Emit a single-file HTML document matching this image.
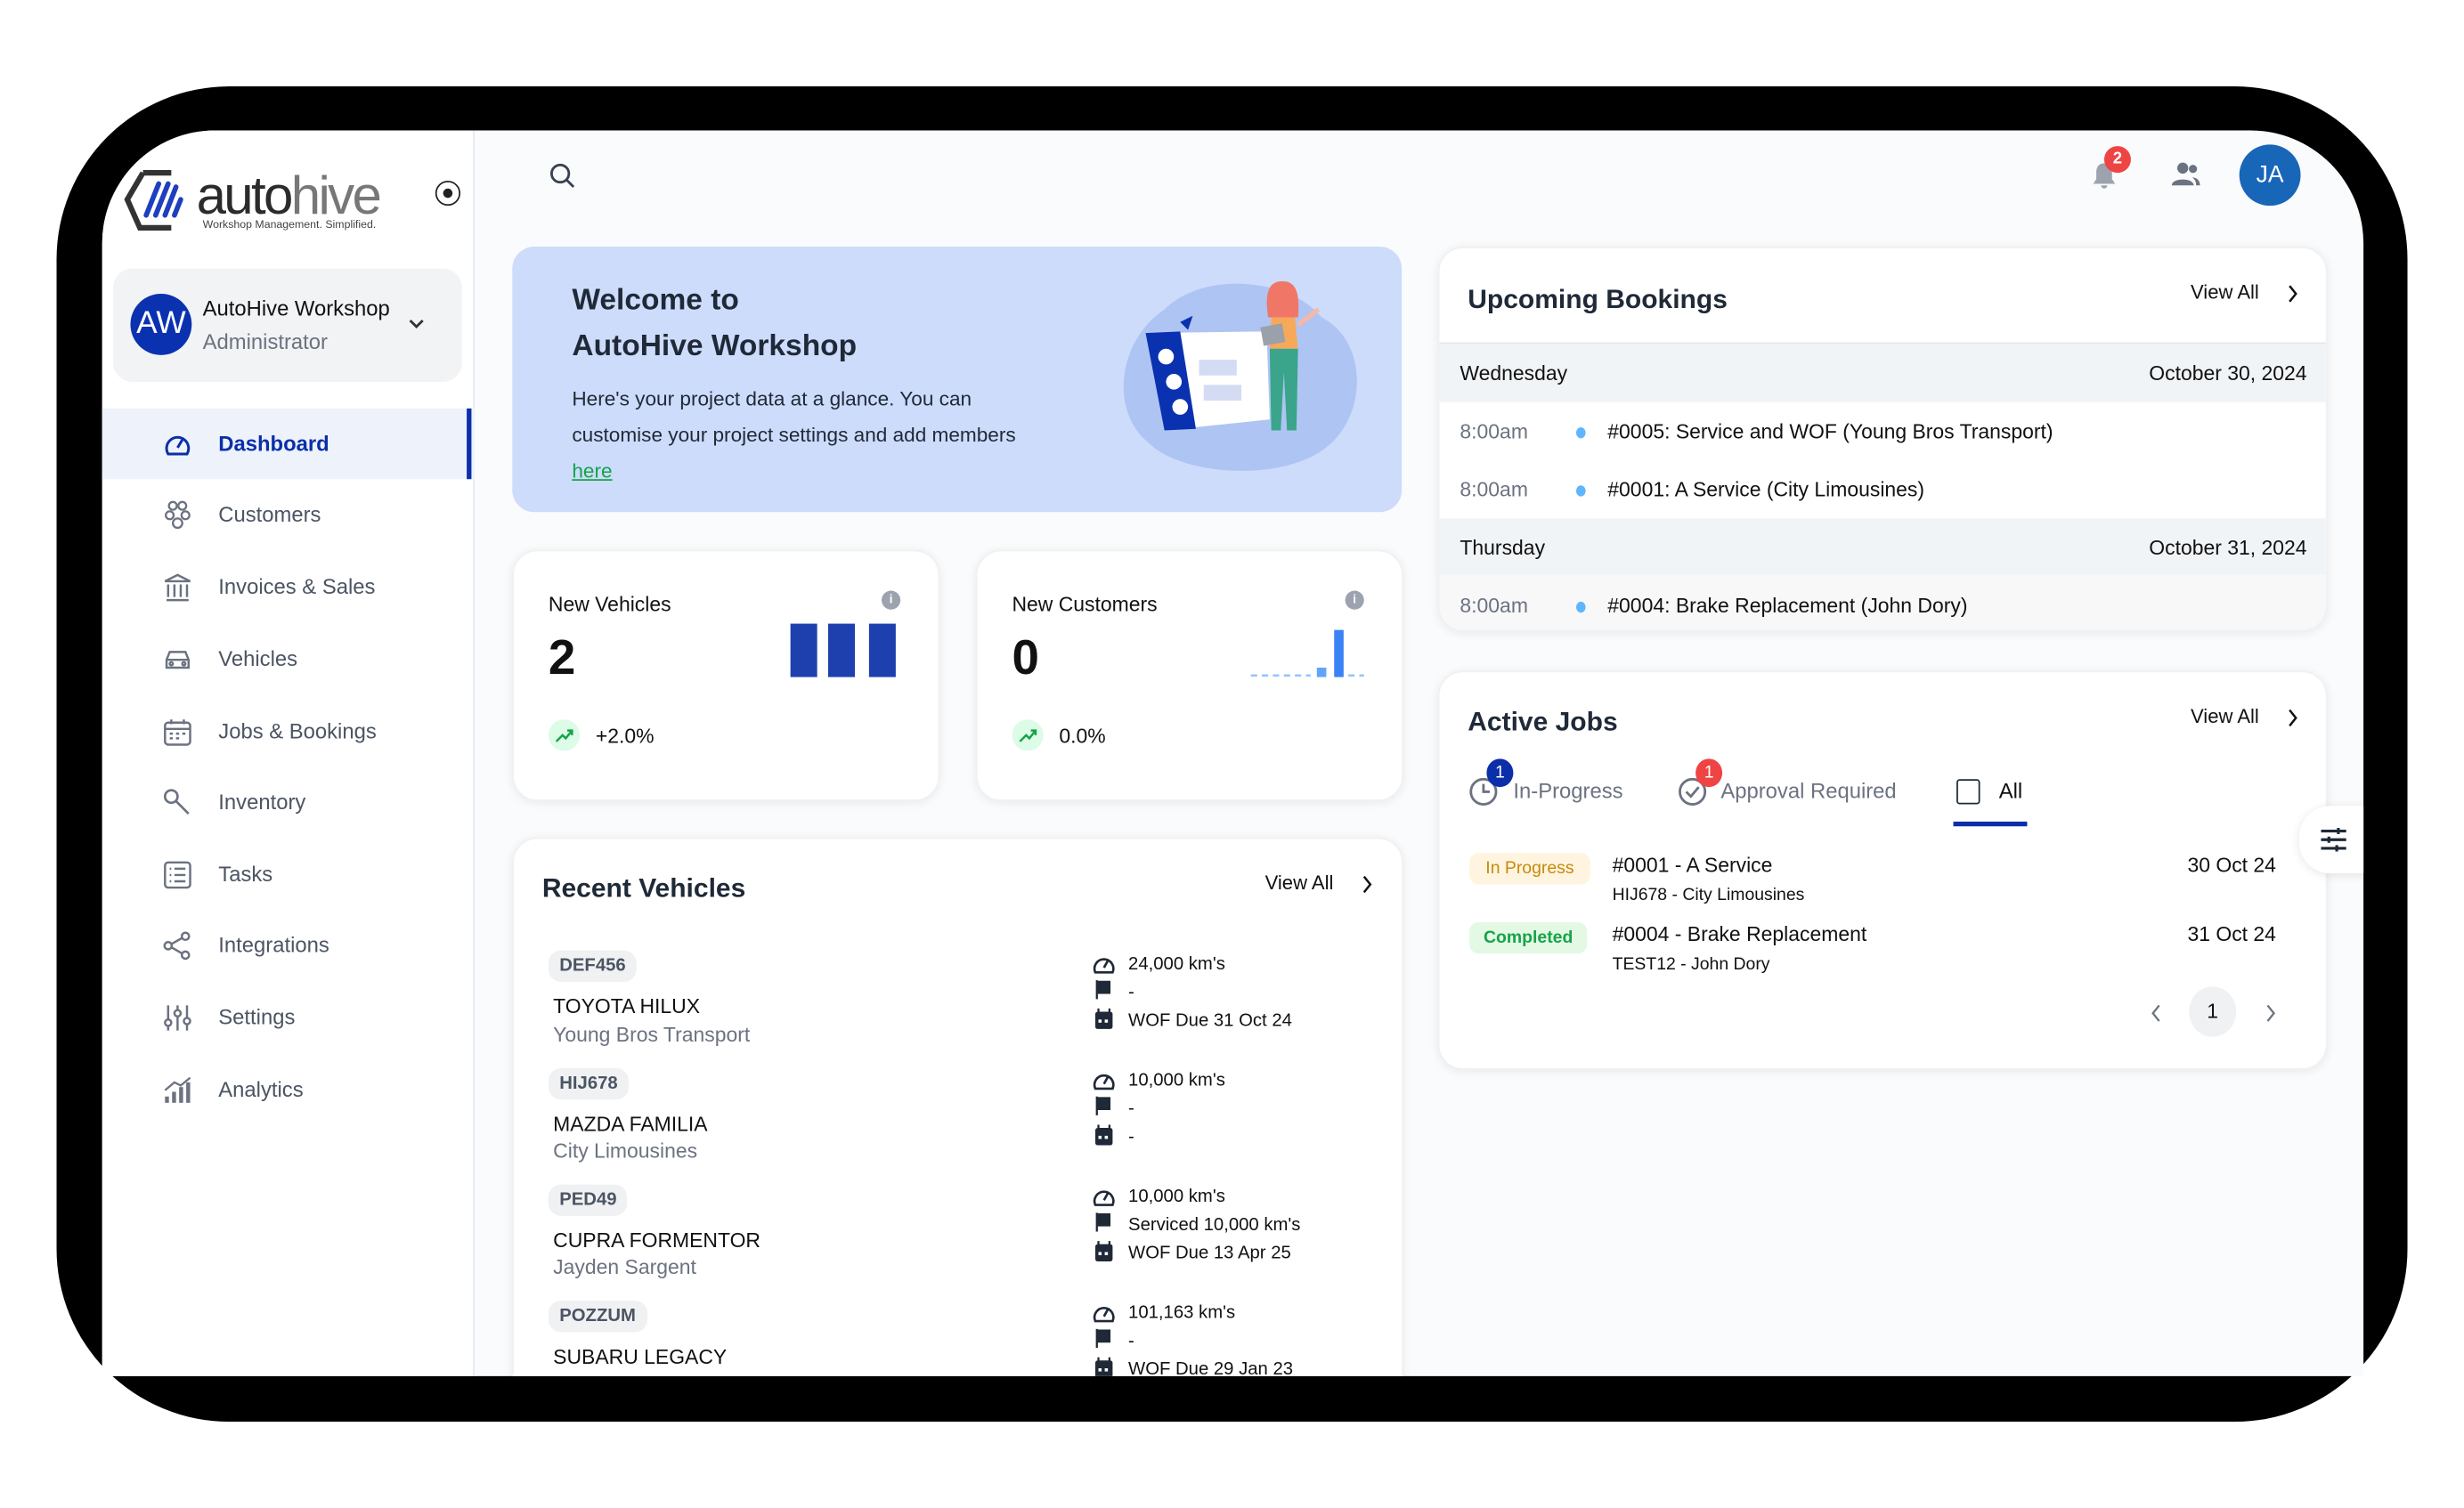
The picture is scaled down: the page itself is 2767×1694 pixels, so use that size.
<!DOCTYPE html>
<html><head><meta charset="utf-8"><style>
*{margin:0;padding:0;box-sizing:border-box}
html,body{width:2767px;height:1693px;overflow:hidden;background:#fff}
#s{position:absolute;left:0;top:0;width:1568px;height:960px;transform:scale(1.7647);transform-origin:0 0;font-family:"Liberation Sans",sans-serif;color:#1f2937}
.a{position:absolute}
.frame{left:36px;top:55px;width:1496px;height:850px;background:#000;border-radius:110px}
.screen{left:65px;top:83px;width:1439px;height:793px;background:#fafbfc;border-radius:72px 72px 0 0;overflow:hidden}
.side{left:0;top:0;width:237px;height:793px;background:#fff;border-right:1px solid #e5e7eb}
.card{position:absolute;background:#fff;border-radius:16px;box-shadow:0 1px 6px rgba(0,0,0,.07);border:1px solid #f0f1f3}
.nav{position:absolute;left:0;width:237px;height:45px;font-size:13.5px;color:#4b5563;display:flex;align-items:center}
.nav svg{position:absolute;left:38px;top:13px}
.nav span{position:absolute;left:74px}
.t{position:absolute;white-space:nowrap}
.g{color:#6b7280}
.plate{position:absolute;left:22px;background:#f0f1f3;border-radius:8px;font-size:11.5px;font-weight:bold;color:#4b5563;padding:4px 7px}
</style></head><body><div id="s">
<div class="a frame"></div>
<div class="a screen">
 <div class="a side">
  <!-- logo -->
  <svg class="a" style="left:14px;top:24px" width="190" height="42" viewBox="0 0 190 42">
   <path d="M12 3 L2 20 L10 38 L30 38" fill="none" stroke="#333" stroke-width="3.5"/><path d="M12 3 L30 3" stroke="#333" stroke-width="3.5"/>
   <path d="M14 30 L22 10 M20 30 L28 10 M26 30 L33 12 M32 30 L36 20" stroke="#1e3fbf" stroke-width="3.2" stroke-linecap="round"/>
   <text x="46" y="29" font-size="34" font-family="Liberation Sans" fill="#2b2b2b" letter-spacing="-1.5">auto<tspan fill="#777">hive</tspan></text>
   <text x="50" y="38" font-size="7" fill="#444" font-family="Liberation Sans">Workshop Management. Simplified.</text>
  </svg>
  <div class="a" style="left:212px;top:32px;width:16px;height:16px;border:1.6px solid #222;border-radius:50%"><div class="a" style="left:3.5px;top:3.5px;width:6px;height:6px;background:#222;border-radius:50%"></div></div>
  <div class="a" style="left:7px;top:88px;width:222px;height:72px;background:#f2f3f5;border-radius:12px">
   <div class="a" style="left:11px;top:16px;width:39px;height:39px;border-radius:50%;background:#0a31b0;color:#fff;font-size:20px;text-align:center;line-height:39px">AW</div>
   <div class="t" style="left:57px;top:18px;font-size:13.5px;color:#111;font-weight:500">AutoHive Workshop</div>
   <div class="t g" style="left:57px;top:39px;font-size:13.5px">Administrator</div>
   <svg class="a" style="left:187px;top:30px" width="12" height="10"><path d="M2 3 L6 7 L10 3" fill="none" stroke="#333" stroke-width="1.6"/></svg>
  </div>
  <div class="nav" style="top:177px;background:#eef2fb;color:#0a2fa8;font-weight:bold"><svg width="20" height="20" viewBox="0 0 20 20"><path d="M4 16 A7 7 0 1 1 16 16 Z" fill="none" stroke="#0a2fa8" stroke-width="1.7"/><path d="M10 12 L13 7" stroke="#0a2fa8" stroke-width="1.7"/></svg><span>Dashboard</span><div class="a" style="right:2px;top:0;width:3px;height:45px;background:#0a2fa8"></div></div>
  <div class="nav" style="top:222px"><svg width="20" height="20" viewBox="0 0 20 20" fill="none" stroke="#6b7280" stroke-width="1.3"><circle cx="7" cy="4" r="2.5"/><circle cx="13" cy="4" r="2.5"/><circle cx="5" cy="10" r="2.5"/><circle cx="15" cy="10" r="2.5"/><circle cx="10" cy="15" r="3"/></svg><span>Customers</span></div>
  <div class="nav" style="top:268px"><svg width="20" height="20" viewBox="0 0 20 20" fill="none" stroke="#6b7280" stroke-width="1.4"><path d="M2 6 L10 2 L18 6 Z M3 18 H17 M4 8 V16 M8 8 V16 M12 8 V16 M16 8 V16"/></svg><span>Invoices &amp; Sales</span></div>
  <div class="nav" style="top:314px"><svg width="20" height="20" viewBox="0 0 20 20" fill="none" stroke="#6b7280" stroke-width="1.4"><path d="M3 10 L5 5 H15 L17 10 V15 H3 Z M3 10 H17"/><circle cx="6" cy="12.5" r="1"/><circle cx="14" cy="12.5" r="1"/></svg><span>Vehicles</span></div>
  <div class="nav" style="top:360px"><svg width="20" height="20" viewBox="0 0 20 20" fill="none" stroke="#6b7280" stroke-width="1.4"><rect x="2" y="4" width="16" height="14" rx="2"/><path d="M2 8 H18 M6 2 V5 M14 2 V5 M5 11h2M9 11h2M13 11h2M5 14h2M9 14h2"/></svg><span>Jobs &amp; Bookings</span></div>
  <div class="nav" style="top:405px"><svg width="20" height="20" viewBox="0 0 20 20" fill="none" stroke="#6b7280" stroke-width="1.5"><circle cx="6" cy="6" r="4"/><path d="M9 9 L17 17"/></svg><span>Inventory</span></div>
  <div class="nav" style="top:451px"><svg width="20" height="20" viewBox="0 0 20 20" fill="none" stroke="#6b7280" stroke-width="1.4"><rect x="2" y="2" width="16" height="16" rx="2"/><path d="M5 6h1M8 6h7M5 10h1M8 10h7M5 14h1M8 14h7"/></svg><span>Tasks</span></div>
  <div class="nav" style="top:496px"><svg width="20" height="20" viewBox="0 0 20 20" fill="none" stroke="#6b7280" stroke-width="1.4"><circle cx="4" cy="10" r="2.3"/><circle cx="15" cy="4" r="2.3"/><circle cx="15" cy="16" r="2.3"/><path d="M6 9 L13 5 M6 11 L13 15"/></svg><span>Integrations</span></div>
  <div class="nav" style="top:542px"><svg width="20" height="20" viewBox="0 0 20 20" fill="none" stroke="#6b7280" stroke-width="1.4"><path d="M4 2V18M10 2V18M16 2V18"/><circle cx="4" cy="13" r="2" fill="#fff"/><circle cx="10" cy="7" r="2" fill="#fff"/><circle cx="16" cy="12" r="2" fill="#fff"/></svg><span>Settings</span></div>
  <div class="nav" style="top:588px"><svg width="20" height="20" viewBox="0 0 20 20" fill="#6b7280"><rect x="2" y="14" width="2.5" height="4"/><rect x="6.5" y="11" width="2.5" height="7"/><rect x="11" y="8" width="2.5" height="10"/><rect x="15.5" y="5" width="2.5" height="13"/><path d="M2 10 L8 5 L12 7 L18 2" stroke="#6b7280" stroke-width="1.3" fill="none"/></svg><span>Analytics</span></div>
 </div>
 <!-- top bar -->
 <svg class="a" style="left:284px;top:20px" width="18" height="18" viewBox="0 0 18 18" fill="none" stroke="#374151" stroke-width="1.6"><circle cx="7.5" cy="7.5" r="5.5"/><path d="M11.5 11.5 L16 16"/></svg>
 <svg class="a" style="left:1264px;top:19px" width="20" height="20" viewBox="0 0 20 20" fill="#9ca3af"><path d="M10 2 C6 2 5 5 5 8 V12 L3 15 H17 L15 12 V8 C15 5 14 2 10 2Z M8 16 A2 2 0 0 0 12 16Z"/></svg>
 <div class="a" style="left:1274px;top:10px;width:17px;height:17px;border-radius:50%;background:#ef4444;color:#fff;font-size:10.5px;text-align:center;line-height:17px;font-weight:bold">2</div>
 <svg class="a" style="left:1316px;top:19px" width="20" height="18" viewBox="0 0 20 18" fill="#6b7280"><circle cx="8" cy="5" r="3.5"/><path d="M1 16 C1 11 15 11 15 16Z"/><circle cx="14.5" cy="5.5" r="2.6"/><path d="M14 11 C17 11 19 13 19 16 H16.5 C16.5 13.5 15.5 12 14 11Z"/></svg>
 <div class="a" style="left:1360px;top:9px;width:39px;height:39px;border-radius:50%;background:#1866b8;color:#fff;font-size:15px;text-align:center;line-height:39px">JA</div>
 <!-- welcome -->
 <div class="a" style="left:261px;top:74px;width:566px;height:169px;background:#cddcfb;border-radius:14px">
  <div class="t" style="left:38px;top:20px;font-size:19px;font-weight:bold;color:#1f2937;line-height:29px">Welcome to<br>AutoHive Workshop</div>
  <div class="t" style="left:38px;top:85px;font-size:12.8px;line-height:23px;color:#1f2937">Here's your project data at a glance. You can<br>customise your project settings and add members<br><span style="color:#16a34a;text-decoration:underline">here</span></div>
  <svg class="a" style="left:385px;top:20px" width="160" height="125" viewBox="0 0 160 125">
   <path d="M30 20 C55 -5 110 0 130 25 C160 40 160 90 130 110 C100 130 40 125 20 105 C-5 85 0 40 30 20Z" fill="#aec4f3"/>
   <path d="M18 35 L95 34 L97 90 L30 97 Z" fill="#fff"/>
   <path d="M18 35 L40 34 L50 96 L30 97 Z" fill="#0a31b0"/>
   <circle cx="31" cy="50" r="5" fill="#fff"/><circle cx="36" cy="66" r="5" fill="#fff"/><circle cx="40" cy="82" r="5" fill="#fff"/>
   <rect x="52" y="52" width="24" height="10" fill="#d3dcf3"/><rect x="55" y="68" width="24" height="10" fill="#d3dcf3"/>
   <path d="M40 28 L48 24 L45 33Z" fill="#0a31b0"/>
   <path d="M105 2 C95 2 94 12 96 25 L115 25 C116 12 115 2 105 2Z" fill="#f07767"/>
   <path d="M98 25 L113 25 L115 45 L97 45Z" fill="#f7a95a"/>
   <path d="M97 45 L115 45 L114 97 L108 97 L106 60 L104 97 L98 97Z" fill="#3aa58a"/>
   <path d="M115 30 L128 20" stroke="#f5b8a8" stroke-width="3"/>
   <rect x="92" y="30" width="14" height="12" fill="#9aa1aa" transform="rotate(-10 99 36)"/>
  </svg>
 </div>
 <!-- stat cards -->
 <div class="card" style="left:261px;top:267px;width:272px;height:160px">
  <div class="t" style="left:22px;top:26px;font-size:13px;font-weight:500;color:#111">New Vehicles</div>
  <div class="a" style="left:234px;top:25px;width:12px;height:12px;border-radius:50%;background:#9ca3af;color:#fff;font-size:8px;text-align:center;line-height:12px;font-weight:bold">i</div>
  <div class="t" style="left:22px;top:50px;font-size:31px;font-weight:bold;color:#111">2</div>
  <div class="a" style="left:176px;top:46px;width:17px;height:34px;background:#1e40af"></div>
  <div class="a" style="left:200px;top:46px;width:17px;height:34px;background:#1e40af"></div>
  <div class="a" style="left:226px;top:46px;width:17px;height:34px;background:#1e40af"></div>
  <div class="a" style="left:22px;top:107px;width:20px;height:20px;border-radius:50%;background:#dcfce7"></div>
  <svg class="a" style="left:26px;top:111px" width="12" height="12"><path d="M1 10 L5 6 L7 8 L11 3 M8 3H11V6" fill="none" stroke="#16a34a" stroke-width="1.4"/></svg>
  <div class="t" style="left:52px;top:110px;font-size:13px;color:#111">+2.0%</div>
 </div>
 <div class="card" style="left:556px;top:267px;width:272px;height:160px">
  <div class="t" style="left:22px;top:26px;font-size:13px;font-weight:500;color:#111">New Customers</div>
  <div class="a" style="left:234px;top:25px;width:12px;height:12px;border-radius:50%;background:#9ca3af;color:#fff;font-size:8px;text-align:center;line-height:12px;font-weight:bold">i</div>
  <div class="t" style="left:22px;top:50px;font-size:31px;font-weight:bold;color:#111">0</div>
  <svg class="a" style="left:172px;top:46px" width="76" height="36"><path d="M2 33H40" stroke="#93c5fd" stroke-width="1.5" stroke-dasharray="4 3"/><rect x="44" y="28" width="6" height="6" fill="#60a5fa"/><rect x="55" y="4" width="6" height="30" fill="#3b82f6"/><path d="M64 33H74" stroke="#93c5fd" stroke-width="1.5" stroke-dasharray="4 3"/></svg>
  <div class="a" style="left:22px;top:107px;width:20px;height:20px;border-radius:50%;background:#dcfce7"></div>
  <svg class="a" style="left:26px;top:111px" width="12" height="12"><path d="M1 10 L5 6 L7 8 L11 3 M8 3H11V6" fill="none" stroke="#16a34a" stroke-width="1.4"/></svg>
  <div class="t" style="left:52px;top:110px;font-size:13px;color:#111">0.0%</div>
 </div>
 <!-- recent vehicles -->
 <div class="card" style="left:261px;top:450px;width:567px;height:400px">
  <div class="t" style="left:18px;top:22px;font-size:17px;font-weight:bold;color:#1f2937">Recent Vehicles</div>
  <div class="t" style="left:478px;top:21px;font-size:12.5px;font-weight:500;color:#111">View All</div>
  <svg class="a" style="left:538px;top:22px" width="10" height="14"><path d="M3 2 L7 7 L3 12" fill="none" stroke="#111" stroke-width="1.4"/></svg>
  <div class="plate" style="top:71px">DEF456</div><div class="t" style="left:25px;top:99px;font-size:13px;font-weight:500;color:#111">TOYOTA HILUX</div><div class="t g" style="left:25px;top:117px;font-size:13px">Young Bros Transport</div>
  <div class="plate" style="top:146px">HIJ678</div><div class="t" style="left:25px;top:174px;font-size:13px;font-weight:500;color:#111">MAZDA FAMILIA</div><div class="t g" style="left:25px;top:191px;font-size:13px">City Limousines</div>
  <div class="plate" style="top:220px">PED49</div><div class="t" style="left:25px;top:248px;font-size:13px;font-weight:500;color:#111">CUPRA FORMENTOR</div><div class="t g" style="left:25px;top:265px;font-size:13px">Jayden Sargent</div>
  <div class="plate" style="top:294px">POZZUM</div><div class="t" style="left:25px;top:322px;font-size:13px;font-weight:500;color:#111">SUBARU LEGACY</div>
  <div class="t" style="left:367px;top:71px;font-size:11.5px;line-height:18px;color:#111">
   <div style="height:74px;padding-left:24px">24,000 km's<br>-<br>WOF Due 31 Oct 24</div>
   <div style="height:74px;padding-left:24px">10,000 km's<br>-<br>-</div>
   <div style="height:74px;padding-left:24px">10,000 km's<br>Serviced 10,000 km's<br>WOF Due 13 Apr 25</div>
   <div style="height:74px;padding-left:24px">101,163 km's<br>-<br>WOF Due 29 Jan 23</div>
  </div>
  <svg class="a" style="left:367px;top:71px" width="18" height="300" viewBox="0 0 18 300">
   <g id="ic"><path d="M3 14 A6 6 0 1 1 14 14 Z" fill="none" stroke="#1f2937" stroke-width="1.5"/><path d="M8.5 11 L11 6.5" stroke="#1f2937" stroke-width="1.5"/><path d="M4 19 V31 M4 20 H12 V27 H4" fill="#1f2937" stroke="#1f2937" stroke-width="1.3"/><rect x="3" y="39" width="11" height="11" rx="1.5" fill="#1f2937"/><path d="M5 37V40M12 37V40" stroke="#1f2937" stroke-width="1.3"/><rect x="5" y="44" width="2" height="2" fill="#fff"/><rect x="9" y="44" width="2" height="2" fill="#fff"/></g>
   <use href="#ic" y="74"/><use href="#ic" y="148"/><use href="#ic" y="222"/>
  </svg>
 </div>
 <!-- upcoming bookings -->
 <div class="card" style="left:850px;top:74px;width:566px;height:245px;overflow:hidden">
  <div class="t" style="left:18px;top:23px;font-size:17px;font-weight:bold;color:#1f2937">Upcoming Bookings</div>
  <div class="t" style="left:478px;top:21px;font-size:12.5px;font-weight:500;color:#111">View All</div>
  <svg class="a" style="left:538px;top:22px" width="10" height="14"><path d="M3 2 L7 7 L3 12" fill="none" stroke="#111" stroke-width="1.4"/></svg>
  <div class="a" style="left:0;top:60px;width:566px;height:38px;background:#f1f4f7;border-top:1px solid #e5e7eb"></div>
  <div class="t" style="left:13px;top:72px;font-size:13px;color:#111">Wednesday</div>
  <div class="t" style="right:12px;top:72px;font-size:13px;color:#111">October 30, 2024</div>
  <div class="t g" style="left:13px;top:109px;font-size:13px">8:00am</div><div class="a" style="left:87px;top:114px;width:6px;height:7px;border-radius:50%;background:#60b5ff"></div><div class="t" style="left:107px;top:109px;font-size:13px;color:#111">#0005: Service and WOF (Young Bros Transport)</div>
  <div class="t g" style="left:13px;top:146px;font-size:13px">8:00am</div><div class="a" style="left:87px;top:151px;width:6px;height:7px;border-radius:50%;background:#60b5ff"></div><div class="t" style="left:107px;top:146px;font-size:13px;color:#111">#0001: A Service (City Limousines)</div>
  <div class="a" style="left:0;top:172px;width:566px;height:36px;background:#f1f4f7"></div>
  <div class="t" style="left:13px;top:183px;font-size:13px;color:#111">Thursday</div>
  <div class="t" style="right:12px;top:183px;font-size:13px;color:#111">October 31, 2024</div>
  <div class="a" style="left:0;top:208px;width:566px;height:40px;background:#f8f8f9"></div>
  <div class="t g" style="left:13px;top:220px;font-size:13px">8:00am</div><div class="a" style="left:87px;top:225px;width:6px;height:7px;border-radius:50%;background:#60b5ff"></div><div class="t" style="left:107px;top:220px;font-size:13px;color:#111">#0004: Brake Replacement (John Dory)</div>
 </div>
 <!-- active jobs -->
 <div class="card" style="left:850px;top:344px;width:566px;height:254px">
  <div class="t" style="left:18px;top:22px;font-size:17px;font-weight:bold;color:#1f2937">Active Jobs</div>
  <div class="t" style="left:478px;top:21px;font-size:12.5px;font-weight:500;color:#111">View All</div>
  <svg class="a" style="left:538px;top:22px" width="10" height="14"><path d="M3 2 L7 7 L3 12" fill="none" stroke="#111" stroke-width="1.4"/></svg>
  <svg class="a" style="left:18px;top:66px" width="20" height="20" viewBox="0 0 20 20" fill="none" stroke="#6b7280" stroke-width="1.6"><circle cx="10" cy="10" r="8"/><path d="M10 5V10H14"/></svg>
  <div class="a" style="left:30px;top:55px;width:17px;height:18px;border-radius:50%;background:#0a2fa8;color:#fff;font-size:11px;text-align:center;line-height:18px">1</div>
  <div class="t g" style="left:47px;top:68px;font-size:13.5px">In-Progress</div>
  <svg class="a" style="left:151px;top:66px" width="20" height="20" viewBox="0 0 20 20" fill="none" stroke="#6b7280" stroke-width="1.6"><circle cx="10" cy="10" r="8"/><path d="M6 10L9 13L14 7"/></svg>
  <div class="a" style="left:163px;top:55px;width:17px;height:18px;border-radius:50%;background:#ef4444;color:#fff;font-size:11px;text-align:center;line-height:18px">1</div>
  <div class="t g" style="left:179px;top:68px;font-size:13.5px">Approval Required</div>
  <div class="a" style="left:329px;top:68px;width:15px;height:16px;border:1.8px solid #1f2937;border-radius:2px"></div>
  <div class="t" style="left:356px;top:68px;font-size:13.5px;color:#111">All</div>
  <div class="a" style="left:327px;top:95px;width:47px;height:3px;background:#0a2fa8"></div>
  <div class="a" style="left:19px;top:115px;width:77px;height:20px;border-radius:6px;background:#fff4df;color:#c78a0b;font-size:11px;text-align:center;line-height:20px;font-weight:500">In Progress</div>
  <div class="t" style="left:110px;top:115px;font-size:13px;font-weight:500;color:#111">#0001 - A Service</div>
  <div class="t" style="left:110px;top:136px;font-size:11px;color:#111">HIJ678 - City Limousines</div>
  <div class="t" style="left:476px;top:115px;font-size:13px;color:#111">30 Oct 24</div>
  <div class="a" style="left:19px;top:159px;width:75px;height:20px;border-radius:6px;background:#e4f9e4;color:#16a34a;font-size:11px;text-align:center;line-height:20px;font-weight:bold">Completed</div>
  <div class="t" style="left:110px;top:159px;font-size:13px;font-weight:500;color:#111">#0004 - Brake Replacement</div>
  <div class="t" style="left:110px;top:180px;font-size:11px;color:#111">TEST12 - John Dory</div>
  <div class="t" style="left:476px;top:159px;font-size:13px;color:#111">31 Oct 24</div>
  <svg class="a" style="left:451px;top:210px" width="10" height="14"><path d="M7 2 L3 7 L7 12" fill="none" stroke="#6b7280" stroke-width="1.3"/></svg>
  <div class="a" style="left:477px;top:200px;width:30px;height:32px;border-radius:50%;background:#f0f1f3;font-size:13px;text-align:center;line-height:32px;color:#111">1</div>
  <svg class="a" style="left:524px;top:210px" width="10" height="14"><path d="M3 2 L7 7 L3 12" fill="none" stroke="#6b7280" stroke-width="1.3"/></svg>
 </div>
 <div class="a" style="left:1398px;top:430px;width:45px;height:43px;background:#fff;border-radius:20px 0 0 20px;box-shadow:0 1px 6px rgba(0,0,0,.1)">
  <svg class="a" style="left:13px;top:13px" width="18" height="17" viewBox="0 0 18 17" stroke="#1f2937" stroke-width="1.8" fill="none"><path d="M1 3H17M1 8.5H17M1 14H17M12 1V5M6 6.5V10.5M11 12V16"/></svg>
 </div>
</div>
</div></body></html>
